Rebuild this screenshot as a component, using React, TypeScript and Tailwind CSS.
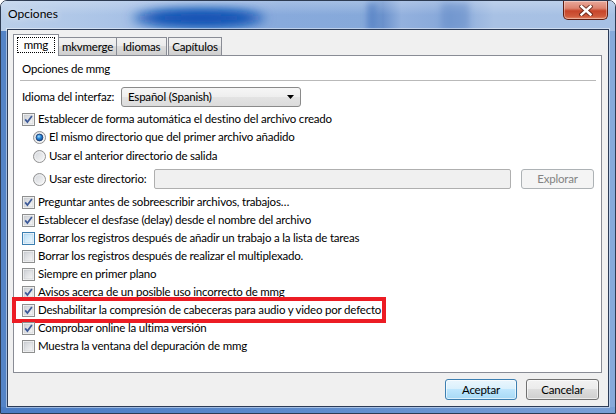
import React from "react";

const CheckBox = ({ checked = false, hover = false }: { checked?: boolean; hover?: boolean }) => (
  <svg width="13" height="13" viewBox="0 0 13 13" className="shrink-0">
    <defs>
      <linearGradient id="cbn" x1="0" y1="0" x2="1" y2="1">
        <stop offset="0" stopColor="#cdd0d5" />
        <stop offset="1" stopColor="#f7f7f7" />
      </linearGradient>
      <linearGradient id="cbh" x1="0" y1="0" x2="1" y2="1">
        <stop offset="0" stopColor="#b9def6" />
        <stop offset="1" stopColor="#eef8fe" />
      </linearGradient>
    </defs>
    <rect x="0.5" y="0.5" width="12" height="12" fill="#fdfdfd" stroke={hover ? "#3c7fb1" : "#8e8f8f"} />
    <rect x="2" y="2" width="9" height="9" fill={hover ? "url(#cbh)" : "url(#cbn)"} stroke={hover ? "#a8cbe6" : "#c3c5c9"} strokeWidth="0.6" />
    {checked && <path d="M3.2 6.4 L5.4 9.1 L9.9 2.9" fill="none" stroke="#3d5a98" strokeWidth="1.7" />}
  </svg>
);

const Radio = ({ checked = false }: { checked?: boolean }) => (
  <svg width="13" height="13" viewBox="0 0 13 13" className="shrink-0">
    <defs>
      <linearGradient id="rgn" x1="0" y1="0" x2="1" y2="1">
        <stop offset="0" stopColor="#d0d3d8" />
        <stop offset="1" stopColor="#fafafa" />
      </linearGradient>
      <radialGradient id="rgs" cx="0.4" cy="0.35" r="0.7">
        <stop offset="0" stopColor="#9fdcff" />
        <stop offset="0.45" stopColor="#2a86d6" />
        <stop offset="1" stopColor="#0b3f86" />
      </radialGradient>
    </defs>
    <circle cx="6.5" cy="6.5" r="6" fill="url(#rgn)" stroke="#929292" />
    <circle cx="6.5" cy="6.5" r="4.6" fill="none" stroke="#ffffff" strokeOpacity="0.6" strokeWidth="0.8" />
    {checked && <circle cx="6.5" cy="6.5" r="3.4" fill="url(#rgs)" stroke="#1c3a6e" strokeWidth="0.8" />}
  </svg>
);

const CheckRow = ({ label, checked, hover, children }: { label: string; checked?: boolean; hover?: boolean; children?: React.ReactNode }) => (
  <div className="relative h-[18px] flex items-center gap-[3px] pl-[8px] whitespace-nowrap">
    <CheckBox checked={checked} hover={hover} />
    <span className="leading-[18px]">{label}</span>
    {children}
  </div>
);

const RadioRow = ({ label, checked }: { label: string; checked?: boolean }) => (
  <div className="h-[18px] flex items-center gap-[3px] pl-[19px] whitespace-nowrap">
    <Radio checked={checked} />
    <span className="leading-[18px]">{label}</span>
  </div>
);

const Glass = () => (
  <svg className="absolute inset-0" width="616" height="414" viewBox="0 0 616 414">
    <defs>
      <linearGradient id="tb" x1="0" y1="0" x2="1" y2="0">
        <stop offset="0" stopColor="#bacfe9" />
        <stop offset="0.17" stopColor="#abc4e7" />
        <stop offset="0.45" stopColor="#88aadc" />
        <stop offset="0.59" stopColor="#86a9da" />
        <stop offset="0.62" stopColor="#6a91cc" />
        <stop offset="0.65" stopColor="#93b1de" />
        <stop offset="0.73" stopColor="#86a7d9" />
        <stop offset="0.8" stopColor="#a8c1e4" />
        <stop offset="1" stopColor="#a6c0e4" />
      </linearGradient>
      <linearGradient id="shine" x1="0" y1="0" x2="0" y2="1">
        <stop offset="0" stopColor="#ffffff" stopOpacity="0.25" />
        <stop offset="1" stopColor="#ffffff" stopOpacity="0" />
      </linearGradient>
      <linearGradient id="btm" x1="0" y1="0" x2="1" y2="0">
        <stop offset="0" stopColor="#4a7cc4" />
        <stop offset="0.5" stopColor="#5d8bcc" />
        <stop offset="1" stopColor="#7aa0d6" />
      </linearGradient>
      <filter id="bl" x="-50%" y="-100%" width="200%" height="300%">
        <feGaussianBlur stdDeviation="6" />
      </filter>
      <filter id="bl2" x="-100%" y="-100%" width="300%" height="300%">
        <feGaussianBlur stdDeviation="3" />
      </filter>
    </defs>
    <rect width="616" height="414" fill="url(#tb)" />
    <rect width="616" height="14" fill="url(#shine)" />
    <ellipse cx="198" cy="17" rx="66" ry="8" fill="#0b4cb0" filter="url(#bl)" />
    <ellipse cx="200" cy="17" rx="50" ry="5" fill="#1052b5" filter="url(#bl)" />
    <rect x="366" y="2" width="10" height="28" fill="#4a77bf" opacity="0.55" filter="url(#bl2)" />
    <rect x="440" y="2" width="28" height="28" fill="#5d86c5" opacity="0.45" filter="url(#bl2)" />
    <rect x="0" y="30" width="8" height="384" fill="#5484c7" />
    <rect x="608" y="30" width="8" height="384" fill="#86aadb" />
    <rect x="0" y="406" width="616" height="8" fill="url(#btm)" />
  </svg>
);

const CloseButton = () => (
  <div className="relative w-[45px] h-[19px] rounded-b-[5px] border border-t-0 border-[#5e1d12] bg-[linear-gradient(to_bottom,#e9a99b_0%,#dd8470_40%,#c7452a_55%,#cf5a3c_85%,#e58a6a_100%)] shadow-[inset_0_0_0_1px_rgba(255,255,255,0.35)] flex items-center justify-center">
    <svg width="14" height="11" viewBox="0 0 14 11">
      <path d="M2.5 1.5 L11.5 9.5 M11.5 1.5 L2.5 9.5" stroke="#4b1a10" strokeOpacity="0.7" strokeWidth="4.4" strokeLinecap="square" />
      <path d="M2.5 1.5 L11.5 9.5 M11.5 1.5 L2.5 9.5" stroke="#ffffff" strokeWidth="2.4" strokeLinecap="square" />
    </svg>
  </div>
);

const tabBg = "bg-[linear-gradient(to_bottom,#f2f2f2_0%,#ebebeb_50%,#dddddd_50%,#cfcfcf_100%)]";

export default function App() {
  return (
    <div className="w-[616px] h-[414px] bg-white [font-family:Lato,'Liberation_Sans',sans-serif] text-[11.5px] tracking-[-0.2px] text-black">
      <div className="relative w-[616px] h-[414px] rounded-t-[7px] border border-[#2d3b52] overflow-hidden flex flex-col">
        <Glass />
        <div className="relative h-[28px] flex items-start">
          <span className="ml-[7px] mt-[5px] text-[12px] tracking-[0px] leading-[16px] [text-shadow:0_0_6px_rgba(255,255,255,0.9)]">Opciones</span>
          <div className="ml-auto mr-[7px]">
            <CloseButton />
          </div>
        </div>
        <div className="relative flex-1 mx-[6px] mb-[6px] border border-[#2c3c58] bg-[#f0f0f0] shadow-[0_0_0_1px_rgba(255,255,255,0.45)] flex flex-col">
          {/* tabs */}
          <div className="relative z-10 mt-[4px] ml-[5px] h-[22px] flex items-start">
            <div className="h-[22px] w-[46px] border border-b-0 border-[#898c95] bg-white flex items-start justify-center pt-[2px]">
              <span className="h-[16px] px-[6px] border border-dotted border-black leading-[14px]">mmg</span>
            </div>
            <div className={`mt-[3px] h-[18px] w-[58px] border border-b-0 border-l-0 border-[#898c95] ${tabBg} flex items-center justify-center leading-[16px]`}>mkvmerge</div>
            <div className={`mt-[3px] h-[18px] w-[50px] border border-b-0 border-l-0 border-[#898c95] ${tabBg} flex items-center justify-center leading-[16px]`}>Idiomas</div>
            <div className={`mt-[3px] ml-px h-[18px] w-[54px] border border-b-0 border-[#898c95] ${tabBg} flex items-center justify-center leading-[16px]`}>Capítulos</div>
          </div>
          {/* panel */}
          <div className="-mt-px ml-[5px] mr-[6px] h-[318px] border border-[#898c95] bg-white flex flex-col">
            <div className="mt-[4px] h-[18px] pl-[8px] leading-[18px]">Opciones de mmg</div>
            <div className="mt-[2px] ml-[6px] mr-[5px] h-px bg-[#b9b9b9]" />
            <div className="mt-[6px] h-[20px] pl-[8px] flex items-center">
              <span className="w-[99px] leading-[18px] whitespace-nowrap">Idioma del interfaz:</span>
              <div className="w-[180px] h-[20px] rounded-[3px] border border-[#8a8a8a] bg-[linear-gradient(to_bottom,#f6f6f6_0%,#eeeeee_50%,#e3e3e3_50%,#dcdcdc_100%)] flex items-center pl-[6px] pr-[6px]">
                <span className="flex-1 leading-[16px]">Español (Spanish)</span>
                <svg width="7" height="4" viewBox="0 0 7 4">
                  <polygon points="0,0 7,0 3.5,4" fill="#000" />
                </svg>
              </div>
            </div>
            <div className="mt-[3px]">
              <CheckRow label="Establecer de forma automática el destino del archivo creado" checked />
            </div>
            <RadioRow label="El mismo directorio que del primer archivo añadido" checked />
            <div className="mt-[1px]">
              <RadioRow label="Usar el anterior directorio de salida" />
            </div>
            <div className="mt-[4px] h-[20px] flex items-center pl-[19px] pr-[7px]">
              <Radio />
              <span className="ml-[3px] w-[105px] leading-[18px] whitespace-nowrap">Usar este directorio:</span>
              <div className="w-[357px] h-[20px] rounded-[2px] border border-[#afafaf] bg-[#f0f0f0]" />
              <div className="ml-auto w-[73px] h-[20px] rounded-[3px] border border-[#adb2b5] bg-[#f4f4f4] text-[#838383] flex items-center justify-center leading-[16px]">Explorar</div>
            </div>
            <div className="mt-[4px] flex flex-col">
              <CheckRow label="Preguntar antes de sobreescribir archivos, trabajos…" checked />
              <CheckRow label="Establecer el desfase (delay) desde el nombre del archivo" checked />
              <CheckRow label="Borrar los registros después de añadir un trabajo a la lista de tareas" hover />
              <CheckRow label="Borrar los registros después de realizar el multiplexado." />
              <CheckRow label="Siempre en primer plano" />
              <CheckRow label="Avisos acerca de un posible uso incorrecto de mmg" checked />
              <CheckRow label="Deshabilitar la compresión de cabeceras para audio y video por defecto" checked>
                <span className="absolute left-[-2px] top-[-4px] w-[374px] h-[26px] border-[4px] border-[#ec1c24] pointer-events-none" />
              </CheckRow>
              <CheckRow label="Comprobar online la ultima versión" checked />
              <CheckRow label="Muestra la ventana del depuración de mmg" />
            </div>
          </div>
          {/* buttons */}
          <div className="mt-[6px] h-[21px] flex justify-end gap-[9px] pr-[9px]">
            <div className="w-[72px] h-[21px] rounded-[3px] border border-[#3c7fb1] bg-[linear-gradient(to_bottom,#eaf6fd_0%,#d9f0fc_50%,#bee6fd_50%,#a7d9f5_100%)] shadow-[inset_0_0_0_1px_rgba(255,255,255,0.6)] flex items-center justify-center leading-[16px]">Aceptar</div>
            <div className={`w-[73px] h-[21px] rounded-[3px] border border-[#707070] ${tabBg} shadow-[inset_0_0_0_1px_rgba(255,255,255,0.6)] flex items-center justify-center leading-[16px]`}>Cancelar</div>
          </div>
        </div>
      </div>
    </div>
  );
}
